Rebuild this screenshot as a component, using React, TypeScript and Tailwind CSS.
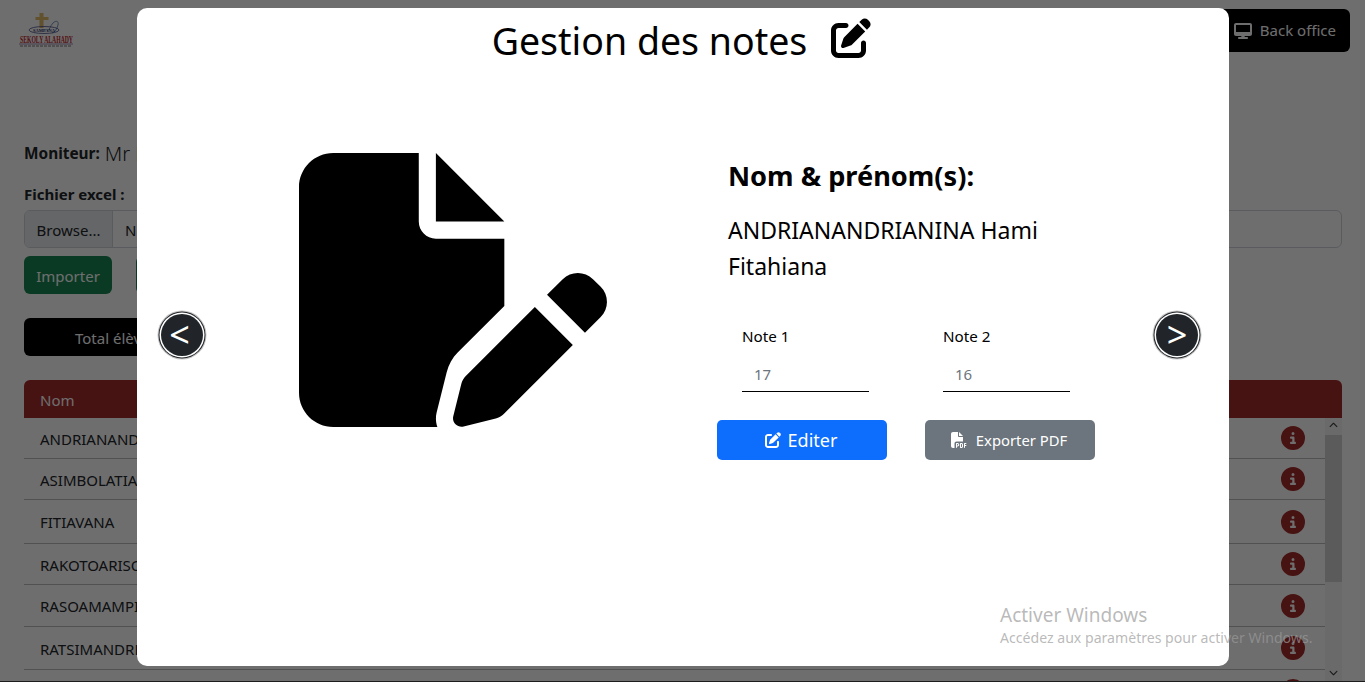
import { FaPenToSquare, FaFilePen, FaFilePdf, FaCircleInfo, FaDesktop, FaChevronUp, FaChevronDown } from "react-icons/fa6";

const rows = [
  { id: 1, name: "ANDRIANANDRIANINA Hami Fitahiana", h: "h-[41px]" },
  { id: 2, name: "ASIMBOLATIANA", h: "h-[41px]" },
  { id: 3, name: "FITIAVANA", h: "h-[44px]" },
  { id: 4, name: "RAKOTOARISOA", h: "h-[41px]" },
  { id: 5, name: "RASOAMAMPIONONA", h: "h-[42px]" },
  { id: 6, name: "RATSIMANDRESY", h: "h-[43px]" },
  { id: 7, name: "", h: "h-[42px]" },
];

function Logo() {
  return (
    <svg viewBox="0 0 60 38" className="mt-[10px] ml-[18px] h-[38px] w-[60px]">
      <path d="M21.500 3h4v4h5v3h-5v8h-4v-8h-4V7h4z" fill="#e0bb6a" />
      <path d="M29 21c3-1 3-5 6-8 3-3 6-2 5 2-1 4-3 7-6 8" fill="none" stroke="#7a94bd" strokeWidth="1" />
      <ellipse cx="26" cy="20" rx="15" ry="3.500" fill="none" stroke="#4a4f8c" strokeWidth="0.800" />
      <text x="26" y="21.500" textAnchor="middle" fontSize="4.500" fontWeight="700" fill="#26306b" fontFamily="Liberation Serif, serif">SAMPANA</text>
      <text x="2" y="32.500" fontSize="9.500" fontWeight="700" fill="#c22a30" fontFamily="Liberation Serif, serif" textLength="53" lengthAdjust="spacingAndGlyphs">SEKOLY ALAHADY</text>
      <path d="M1 34h54" stroke="#8a6fa0" strokeWidth="0.800" />
      <path d="M2 36h52" stroke="#777" strokeWidth="1" strokeDasharray="3 1" />
    </svg>
  );
}

function Arrow({ label, side }: { label: string; side: string }) {
  return (
    <button className={`absolute top-[306px] ${side} flex h-[42px] w-[42px] items-center justify-center rounded-full bg-[#212529] text-[36px] leading-none text-white shadow-[0_0_0_1.500px_#ffffff,0_0_0_2.500px_#212529,0_0_0_3.500px_#c4c4c4]`}>
      {label}
    </button>
  );
}

function NoteField({ label, value }: { label: string; value: string }) {
  return (
    <div className="w-[127px]">
      <div className="text-[15.200px] leading-[22px] text-black">{label}</div>
      <div className="mt-[16px] h-[29px] border-b border-black pl-[12px] text-[15px] leading-[22px] text-[#6c757d]">{value}</div>
    </div>
  );
}

export default function App() {
  return (
    <div className="relative h-[682px] w-[1365px] overflow-hidden bg-white font-['Noto_Sans',sans-serif] text-[#212529]">
      <header className="flex h-[120px] justify-between">
        <Logo />
        <button className="mt-[9px] mr-[15px] flex h-[43px] w-[200px] items-center justify-end gap-[8px] rounded-[6px] bg-black pr-[14px] text-[15px] text-white">
          <FaDesktop className="h-[16px] w-[18px]" />
          Back office
        </button>
      </header>

      <main className="pr-[23px] pl-[24px] pt-[22px]">
        <div className="flex h-[24px] items-center gap-[5px]">
          <b className="text-[15.400px]">Moniteur:</b>
          <span className="text-[20px] font-light">Mr R</span>
        </div>
        <div className="mt-[16px] h-[24px] text-[15px] font-bold leading-[24px]">Fichier excel :</div>
        <div className="mt-[4px] flex h-[38px] overflow-hidden rounded-[6px] border border-[#ced4da] text-[15px]">
          <div className="flex w-[88px] items-center justify-center border-r border-[#ced4da] bg-[#e9ecef] pt-[2px]">Browse...</div>
          <div className="flex items-center pl-[12px] pt-[2px]">No file selected.</div>
        </div>
        <div className="mt-[8px] flex h-[38px] gap-[24px] text-[15px] text-white">
          <button className="w-[88px] rounded-[6px] bg-[#198754] pt-[2px]">Importer</button>
          <button className="w-[88px] rounded-[6px] bg-[#198754] pt-[2px]">Exporter</button>
        </div>
        <div className="mt-[24px] flex h-[38px] w-[300px] items-center rounded-[6px] bg-black pl-[51px] pt-[2px] text-[15px] text-white">Total élèves</div>
        <div className="mt-[24px] flex h-[38px] items-center rounded-t-[6px] bg-[#a52a2a] pl-[16px] pt-[2px] text-[15px] text-white">Nom</div>
        <div className="flex h-[300px]">
          <div className="flex-1">
            {rows.map((r) => (
              <div key={r.id} className={`flex ${r.h} items-center justify-between border-b border-[#bdbdbd] pl-[16px] pr-[20px] text-[15px]`}>
                <span className="pt-[2px]">{r.name}</span>
                <FaCircleInfo className="h-[24px] w-[24px] text-[#a52a2a]" />
              </div>
            ))}
          </div>
          <div className="flex w-[17px] flex-col items-center bg-[#f5f5f5] text-[#404040]">
            <FaChevronUp className="mt-[3px] h-[9px] w-[9px]" />
            <div className="mt-[5px] h-[147px] w-full bg-[#d2d2d2]" />
            <FaChevronDown className="mt-[86px] h-[9px] w-[9px]" />
          </div>
        </div>
      </main>

      {/* modal backdrop */}
      <div className="absolute inset-0 bg-black/[0.57]" />

      {/* modal */}
      <div className="absolute left-[137px] top-[8px] h-[658px] w-[1092px] rounded-[10px] bg-white text-black">
        <h1 className="flex h-[66px] items-center justify-center gap-[24px] pr-[3px] text-[37.500px] leading-none">
          <span>Gestion des notes</span>
          <FaPenToSquare className="mb-[6px] h-[40px] w-[40px]" />
        </h1>
        <div className="flex">
          <div className="w-[580px] pl-[162px] pt-[79px]">
            <FaFilePen className="h-[274px] w-[308px]" />
          </div>
          <div className="pt-[82px]">
            <div className="pl-[11px]">
              <div className="text-[27.200px] font-bold leading-[40px]">Nom &amp; prénom(s):</div>
              <div className="mt-[16px] w-[340px] text-[23px] leading-[36px]">ANDRIANANDRIANINA Hami Fitahiana</div>
            </div>
            <div className="mt-[41px] flex gap-[74px] pl-[25px]">
              <NoteField label="Note 1" value="17" />
              <NoteField label="Note 2" value="16" />
            </div>
            <div className="mt-[28px] flex gap-[38px]">
              <button className="flex h-[40px] w-[170px] items-center justify-center gap-[7px] rounded-[5px] bg-[#0d6efd] pr-[2px] text-[18px] text-white">
                <FaPenToSquare className="h-[16px] w-[16px]" />
                Editer
              </button>
              <button className="flex h-[40px] w-[170px] items-center justify-center gap-[9px] rounded-[5px] bg-[#6c757d] pr-[2px] text-[14.800px] text-white">
                <FaFilePdf className="h-[16px] w-[16px]" />
                Exporter PDF
              </button>
            </div>
          </div>
        </div>
        <Arrow label="<" side="left-[24px] pr-[5px]" />
        <Arrow label=">" side="right-[31px]" />
      </div>

      {/* Windows activation watermark */}
      <div className="pointer-events-none absolute left-[1000px] top-[602px] whitespace-nowrap text-[#9b9b9b]/70">
        <div className="text-[19px] leading-[26px]">Activer Windows</div>
        <div className="text-[14.100px] leading-[20px]">Accédez aux paramètres pour activer Windows.</div>
      </div>

      {/* bottom edge of the capture */}
      <div className="absolute inset-x-0 bottom-0 h-px bg-[#1c1c1c]" />
    </div>
  );
}
